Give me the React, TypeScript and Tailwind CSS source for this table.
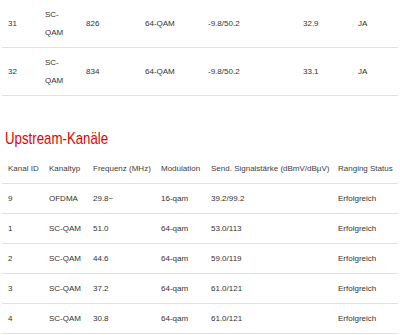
type Row = string[];

const downRows: Row[] = [
  ["31", "SC-QAM", "826", "64-QAM", "-9.8/50.2", "32.9", "JA"],
  ["32", "SC-QAM", "834", "64-QAM", "-9.8/50.2", "33.1", "JA"],
];

const upHead: Row = [
  "Kanal ID",
  "Kanaltyp",
  "Frequenz (MHz)",
  "Modulation",
  "Send. Signalstärke (dBmV/dBµV)",
  "Ranging Status",
];

const upRows: Row[] = [
  ["9", "OFDMA", "29.8~", "16-qam", "39.2/99.2", "Erfolgreich"],
  ["1", "SC-QAM", "51.0", "64-qam", "53.0/113", "Erfolgreich"],
  ["2", "SC-QAM", "44.6", "64-qam", "59.0/119", "Erfolgreich"],
  ["3", "SC-QAM", "37.2", "64-qam", "61.0/121", "Erfolgreich"],
  ["4", "SC-QAM", "30.8", "64-qam", "61.0/121", "Erfolgreich"],
];

export default function App() {
  return (
    <div className="h-[335px] w-[400px] overflow-hidden bg-white font-['Liberation_Sans',Arial,sans-serif] text-[8px] text-[#333]">
      <div className="ml-[2px] w-[396px]">
        {downRows.map((row, i) => (
          <div
            key={i}
            className="grid h-[48px] grid-cols-[37px_41px_59px_63px_95px_55px_46px] items-center border-b border-[#e2e2e2]"
          >
            {row.map((cell, j) => (
              <div key={j} className="px-[6px] leading-[18px]">
                {j === 1 ? (
                  <>
                    SC-
                    <br />
                    QAM
                  </>
                ) : (
                  cell
                )}
              </div>
            ))}
          </div>
        ))}
      </div>

      <h2 className="ml-[5px] mt-[33px] h-[20px] text-[17px] leading-[20px] text-[#e60000]">
        <span className="inline-block origin-left scale-x-[0.78] whitespace-nowrap">Upstream-Kanäle</span>
      </h2>

      <div className="ml-[2px] mt-[5px] w-[396px]">
        <div className="grid h-[30px] grid-cols-[41px_44px_68px_50px_127px_66px] items-center border-b border-[#e2e2e2] text-[#404040]">
          {upHead.map((h) => (
            <div key={h} className="whitespace-nowrap px-[6px]">
              {h}
            </div>
          ))}
        </div>
        {upRows.map((row, i) => (
          <div
            key={i}
            className="grid h-[30px] grid-cols-[41px_44px_68px_50px_127px_66px] items-center border-b border-[#e2e2e2]"
          >
            {row.map((cell, j) => (
              <div key={j} className="whitespace-nowrap px-[6px]">
                {cell}
              </div>
            ))}
          </div>
        ))}
      </div>
    </div>
  );
}
